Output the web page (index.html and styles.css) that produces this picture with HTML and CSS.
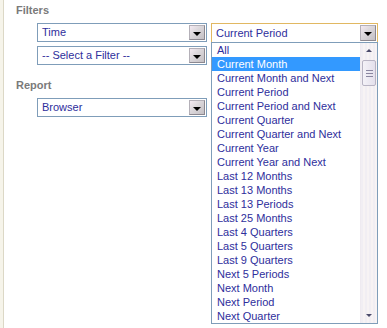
FILE: index.html
```html
<!DOCTYPE html>
<html>
<head>
<meta charset="utf-8">
<link rel="stylesheet" href="styles.css">
</head>
<body>
<div class="frame">
  <div class="edge"></div>
  <div class="content">
    <div class="label">Filters</div>
    <div class="row row-first">
      <div class="select w170"><span class="val">Time</span><span class="btn"><i class="tri"></i></span></div>
      <div class="combo">
        <div class="select focus"><span class="val">Current Period</span><span class="btn"><i class="tri"></i></span></div>
        <div class="list">
          <ul class="items">
            <li>All</li>
            <li class="sel">Current Month</li>
            <li>Current Month and Next</li>
            <li>Current Period</li>
            <li>Current Period and Next</li>
            <li>Current Quarter</li>
            <li>Current Quarter and Next</li>
            <li>Current Year</li>
            <li>Current Year and Next</li>
            <li>Last 12 Months</li>
            <li>Last 13 Months</li>
            <li>Last 13 Periods</li>
            <li>Last 25 Months</li>
            <li>Last 4 Quarters</li>
            <li>Last 5 Quarters</li>
            <li>Last 9 Quarters</li>
            <li>Next 5 Periods</li>
            <li>Next Month</li>
            <li>Next Period</li>
            <li>Next Quarter</li>
          </ul>
          <div class="scroll">
            <span class="arr up"></span>
            <span class="thumb"><i></i><i></i><i></i></span>
            <span class="track"></span>
            <span class="arr down"></span>
          </div>
        </div>
      </div>
    </div>
    <div class="row row-second">
      <div class="select w170"><span class="val">-- Select a Filter --</span><span class="btn"><i class="tri"></i></span></div>
    </div>
    <div class="label label-report">Report</div>
    <div class="row row-report">
      <div class="select w170"><span class="val">Browser</span><span class="btn"><i class="tri"></i></span></div>
    </div>
  </div>
</div>
</body>
</html>
```
FILE: styles.css
```css
html, body {
  margin: 0;
  padding: 0;
  background: #ffffff;
  font-family: "Liberation Sans", Arial, sans-serif;
  font-size: 11px;
}
.frame {
  display: flex;
  height: 328px;
}
.edge {
  width: 3px;
  background: #f6f4ea;
  border-right: 1px solid #dcd8c6;
}
.content {
  flex: 1;
  display: flex;
  flex-direction: column;
  padding-left: 12px;
  padding-top: 4px;
}
.label {
  font-weight: bold;
  color: #7a7a7a;
  line-height: 13px;
  height: 13px;
}
.label-report {
  margin-top: 14px;
}
.row {
  display: flex;
  gap: 4px;
  margin-left: 21px;
}
.row-first { margin-top: 6px; }
.row-second { margin-top: 3px; }
.row-report { margin-top: 6px; }
.select {
  box-sizing: border-box;
  height: 19px;
  border: 1px solid #7f9db9;
  background: #fff;
  display: flex;
  align-items: center;
  justify-content: space-between;
  color: #2e2e9c;
}
.w170 { width: 170px; }
.val {
  padding-left: 4px;
  line-height: 15px;
}
.btn {
  box-sizing: border-box;
  width: 16px;
  height: 15px;
  margin-right: 1px;
  border: 1px solid #b4b0b8;
  border-right-color: #8c8890;
  border-bottom-color: #8c8890;
  background: linear-gradient(135deg, #f4eaf2 0%, #dcd8dc 40%, #c4c0c4 100%);
  display: flex;
  align-items: center;
  justify-content: center;
}
.tri {
  width: 0;
  height: 0;
  border-left: 4px solid transparent;
  border-right: 4px solid transparent;
  border-top: 4px solid #000;
  margin-top: 2px;
}
.combo {
  position: relative;
  width: 167px;
}
.select.focus {
  width: 167px;
  height: 20px;
  border-color: #e1b862;
}
.select.focus .btn {
  height: 16px;
}
.list {
  position: absolute;
  left: 0;
  top: 19px;
  box-sizing: border-box;
  width: 167px;
  height: 282px;
  border: 1px solid #7f9db9;
  background: #fff;
  display: flex;
  z-index: 2;
}
.items {
  list-style: none;
  margin: 0;
  padding: 0;
  flex: 1;
}
.items li {
  height: 14px;
  line-height: 14px;
  padding-left: 5px;
  color: #2e2e9c;
  white-space: nowrap;
}
.items li.sel {
  background: #3399ff;
  color: #ffffff;
}
.scroll {
  width: 16px;
  display: flex;
  flex-direction: column;
  align-items: center;
  background: repeating-linear-gradient(90deg, #f1eef3 0px, #f1eef3 2px, #f7f3f4 2px, #f7f3f4 4px);
  border-left: 1px solid #eeeaf0;
}
.arr {
  width: 0;
  height: 0;
  border-left: 3px solid transparent;
  border-right: 3px solid transparent;
}
.arr.up {
  border-bottom: 3px solid #4a4a6a;
  margin-top: 6px;
}
.arr.down {
  border-top: 3px solid #4a4a6a;
  margin-bottom: 6px;
}
.thumb {
  box-sizing: border-box;
  width: 14px;
  height: 26px;
  margin-top: 8px;
  border: 1px solid #b8b4c4;
  border-radius: 2px;
  background: linear-gradient(90deg, #f4f2f8, #e4e0ec);
  display: flex;
  flex-direction: column;
  align-items: center;
  justify-content: center;
  gap: 2px;
}
.thumb i {
  display: block;
  width: 7px;
  height: 1px;
  background: #8a86a0;
}
.track { flex: 1; }
```
